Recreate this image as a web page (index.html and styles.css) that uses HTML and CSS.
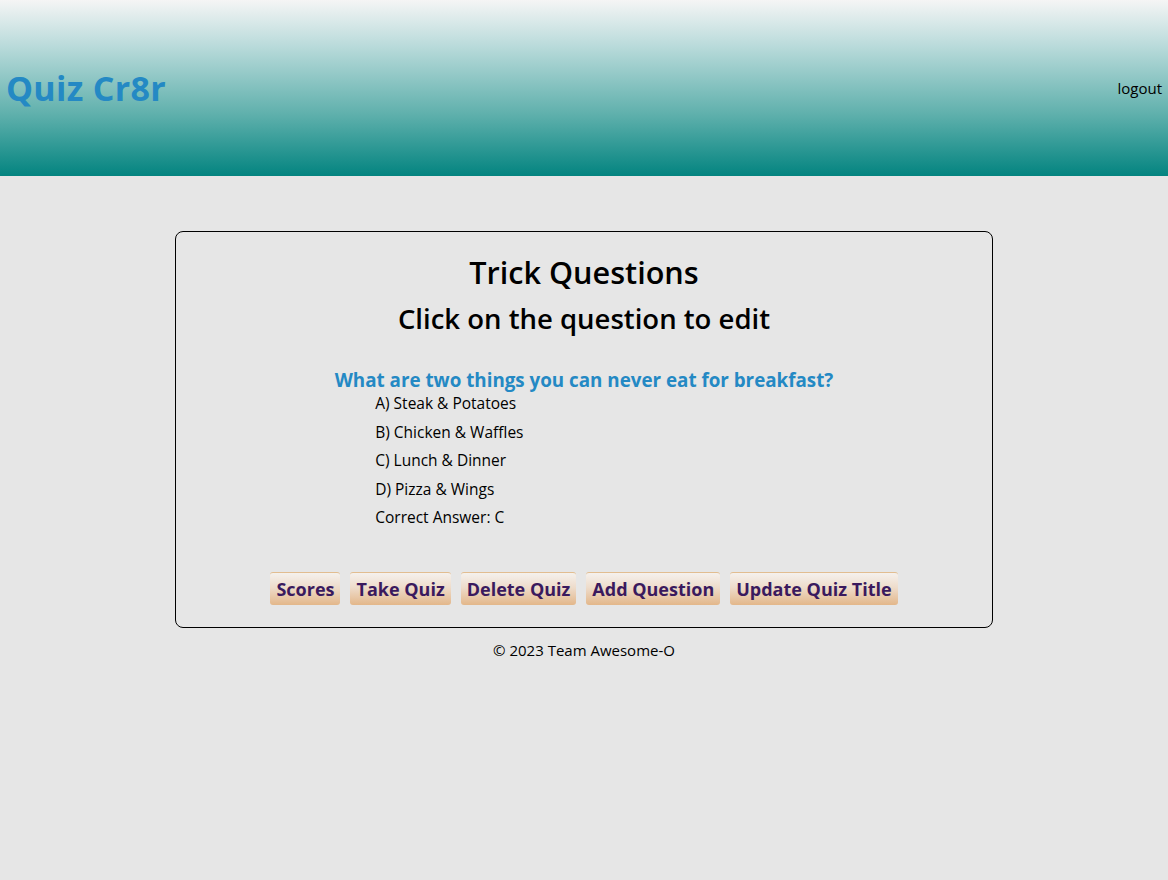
FILE: index.html
```html
<!DOCTYPE html>
<html>
<head>
<meta charset="utf-8">
<link rel="stylesheet" href="styles.css">
</head>
<body>
<header class="top">
  <h1 class="brand">Quiz Cr8r</h1>
  <a class="logout">logout</a>
</header>
<main class="card">
  <h1 class="title">Trick Questions</h1>
  <h2 class="subtitle">Click on the question to edit</h2>
  <div class="question">
    <h3 class="q-text">What are two things you can never eat for breakfast?</h3>
    <ul class="answers">
      <li>A) Steak &amp; Potatoes</li>
      <li>B) Chicken &amp; Waffles</li>
      <li>C) Lunch &amp; Dinner</li>
      <li>D) Pizza &amp; Wings</li>
      <li>Correct Answer: C</li>
    </ul>
  </div>
  <div class="actions">
    <button class="btn">Scores</button>
    <button class="btn">Take Quiz</button>
    <button class="btn">Delete Quiz</button>
    <button class="btn">Add Question</button>
    <button class="btn">Update Quiz Title</button>
  </div>
</main>
<footer class="foot">© 2023 Team Awesome-O</footer>
</body>
</html>
```
FILE: styles.css
```css
html, body {
  margin: 0;
  padding: 0;
}
body {
  background: #e6e6e6;
  font-family: "Open Sans", "DejaVu Sans", sans-serif;
  color: #000;
}
.top {
  height: 176px;
  display: flex;
  align-items: center;
  justify-content: space-between;
  padding: 0 6px;
  background: linear-gradient(to bottom, #f5f5f5 0%, #bcdcdc 25%, #5fb0ac 65%, #038480 100%);
}
.brand {
  margin: 0;
  font-size: 34px;
  font-weight: 700;
  color: #2489c4;
  letter-spacing: 0.3px;
}
.logout {
  font-size: 15px;
  color: #000;
  cursor: pointer;
}
.card {
  width: 70%;
  margin: 55px auto 0;
  box-sizing: border-box;
  border: 1px solid #000;
  border-radius: 8px;
  padding: 20px 0 22px;
  text-align: center;
}
.title {
  margin: 0;
  font-size: 30.6px;
  line-height: 40px;
  font-weight: 600;
}
.subtitle {
  margin: 11px 0 0;
  font-size: 27.5px;
  line-height: 32px;
  font-weight: 600;
}
.question {
  margin-top: 32px;
  display: flex;
  flex-direction: column;
  align-items: center;
}
.q-text {
  margin: 0;
  font-size: 18.8px;
  line-height: 26px;
  font-weight: 700;
  color: #2489c4;
}
.answers {
  list-style: none;
  margin: 0;
  padding: 0 0 0 199px;
  align-self: stretch;
  text-align: left;
  font-size: 15.5px;
}
.answers li {
  line-height: 21px;
  margin-bottom: 7.5px;
}
.actions {
  margin-top: 36px;
  display: flex;
  justify-content: center;
  gap: 10px;
}
.btn {
  font-family: inherit;
  font-size: 18px;
  font-weight: 700;
  color: #3a1a5e;
  height: 33px;
  padding: 0 6px;
  border: none;
  border-top: 1px solid #e2bd90;
  border-radius: 3px;
  background: linear-gradient(to bottom, #f5f1ed 0%, #eedccb 45%, #e3b78a 100%);
}
.foot {
  text-align: center;
  font-size: 15px;
  margin-top: 12px;
}
```
